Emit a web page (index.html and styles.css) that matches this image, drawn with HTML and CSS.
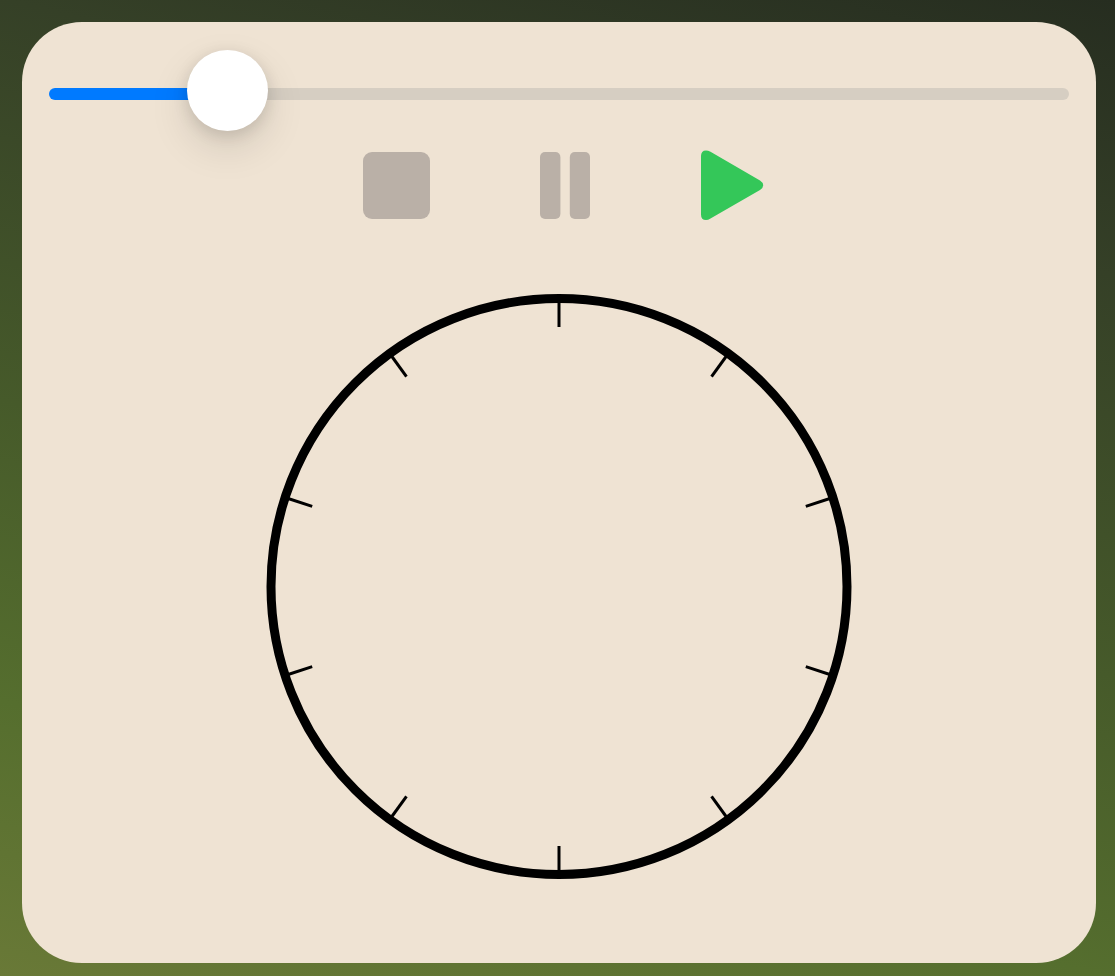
FILE: index.html
```
<!DOCTYPE html>
<html lang="en">
<head>
  <meta charset="utf-8">
  <meta name="viewport" content="width=device-width, initial-scale=1">
  <title>Metronome</title>
  <link rel="stylesheet" href="styles.css">
</head>
<body>
  <main class="card">
    <input class="slider" type="range" min="0" max="1000" value="147" aria-label="Tempo">
    <div class="controls">
      <button class="control stop" type="button" aria-label="Stop" disabled>
        <svg width="68" height="72" viewBox="0 0 68 72" aria-hidden="true"><rect x="1" y="3" width="67" height="67" rx="9"/></svg>
      </button>
      <button class="control pause" type="button" aria-label="Pause" disabled>
        <svg width="50" height="72" viewBox="0 0 50 72" aria-hidden="true"><rect x="0" y="3" width="20.4" height="67" rx="5"/><rect x="29.8" y="3" width="20.2" height="67" rx="5"/></svg>
      </button>
      <button class="control play" type="button" aria-label="Play">
        <svg width="64" height="72" viewBox="0 0 64 72" aria-hidden="true"><path d="M1 7Q1 1.4 6 1.4Q8 1.4 10.5 2.8L60 31.4Q63.2 33.4 63.2 36.2Q63.2 39 60 41L10.5 69.6Q8 71.1 6 71.1Q1 71.1 1 65.5Z"/></svg>
      </button>
    </div>
    <svg class="dial" viewBox="0 0 586 585" role="img" aria-label="Dial">
      <circle cx="293" cy="292.5" r="288" fill="none" stroke="#000" stroke-width="9"/>
      <g transform="translate(293 292.5)" stroke="#000" stroke-width="3">
        <path d="M0-288V-259.5"/>
        <path d="M0-288V-259.5" transform="rotate(36)"/>
        <path d="M0-288V-259.5" transform="rotate(72)"/>
        <path d="M0-288V-259.5" transform="rotate(108)"/>
        <path d="M0-288V-259.5" transform="rotate(144)"/>
        <path d="M0-288V-259.5" transform="rotate(180)"/>
        <path d="M0-288V-259.5" transform="rotate(216)"/>
        <path d="M0-288V-259.5" transform="rotate(252)"/>
        <path d="M0-288V-259.5" transform="rotate(288)"/>
        <path d="M0-288V-259.5" transform="rotate(324)"/>
      </g>
    </svg>
  </main>
</body>
</html>
```
FILE: styles.css
```
* {
  box-sizing: border-box;
}

body {
  margin: 0;
  min-height: 100vh;
  padding: 22px 19px 13px 22px;
  display: flex;
  font-family: "Liberation Sans", sans-serif;
  background: linear-gradient(194deg, #262d20 0%, #354027 22%, #465a2a 54%, #556e2e 78%, #697937 100%);
}

.card {
  flex: 1;
  min-width: 0;
  padding: 66px 27px 84px;
  display: flex;
  flex-direction: column;
  align-items: center;
  background: #efe3d3;
  border-radius: 60px;
}

.slider {
  appearance: none;
  width: 100%;
  height: 12px;
  margin: 0;
  border-radius: 6px;
  background: linear-gradient(to right, #007aff 17.5%, #d6cec2 17.5%);
}

.slider::-webkit-slider-runnable-track {
  height: 12px;
}

.slider::-webkit-slider-thumb {
  appearance: none;
  width: 81px;
  height: 81px;
  margin-top: -38px;
  border-radius: 50%;
  background: #fff;
  box-shadow: 0 16px 40px rgba(0, 0, 0, 0.12), 0 4px 16px rgba(0, 0, 0, 0.12);
}

.controls {
  margin-top: 49px;
  padding-left: 8px;
  display: flex;
  align-items: center;
  gap: 110px;
}

.control {
  display: flex;
  padding: 0;
  border: 0;
  background: none;
  fill: #bab0a7;
}

.play {
  fill: #34c759;
  cursor: pointer;
}

.dial {
  width: 586px;
  max-width: 100%;
  margin-top: 73px;
}
```
